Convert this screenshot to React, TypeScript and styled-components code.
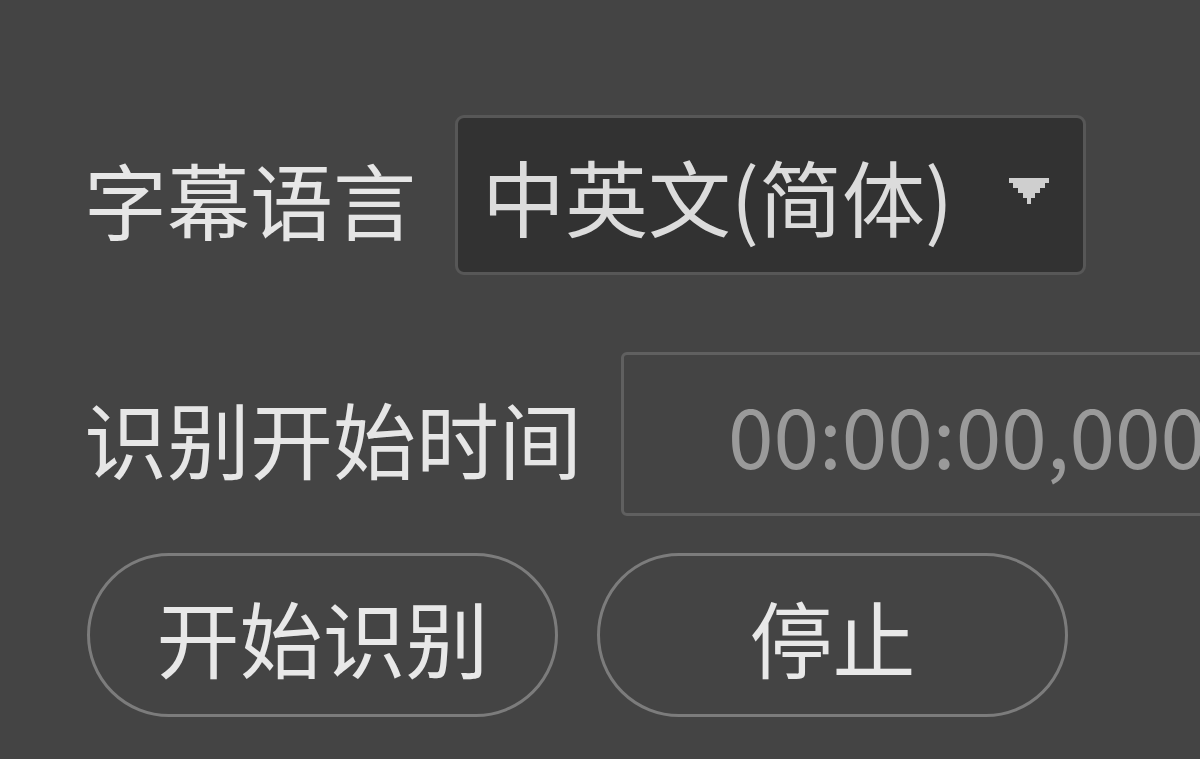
import React from 'react';
import styled, {createGlobalStyle} from 'styled-components';

const GlobalStyle = createGlobalStyle`
    html, body {
        margin: 0;
        padding: 0;
        background: #444444;
        overflow: hidden;
    }
    body {
        font-family: "Noto Sans CJK SC", "Microsoft YaHei", "Noto Sans", sans-serif;
    }
`;

const Panel = styled.div`
    width: 1200px;
    height: 759px;
    box-sizing: border-box;
    padding: 115px 0 0 84px;
    display: flex;
    flex-direction: column;
    overflow: hidden;
`;

const Row = styled.div<{ $after: number }>`
    display: flex;
    align-items: center;
    gap: 39px;
    margin-bottom: ${({$after}) => $after}px;
`;

const Label = styled.span`
    font-size: 83px;
    line-height: 1;
    color: #e6e6e6;
    white-space: nowrap;
    margin-top: 6px;
`;

const Select = styled.div`
    box-sizing: border-box;
    width: 631px;
    height: 160px;
    display: flex;
    align-items: center;
    justify-content: space-between;
    padding: 0 34px 0 24px;
    background: #323232;
    border: 3px solid #575757;
    border-radius: 9px;
`;

const SelectValue = styled.span`
    font-size: 83px;
    line-height: 1;
    color: #dcdcdc;
    white-space: nowrap;
`;

const Arrow = styled.svg`
    width: 40px;
    height: 26px;
    margin-top: -8px;
`;

const TimeInput = styled.div`
    box-sizing: border-box;
    width: 720px;
    flex-shrink: 0;
    height: 164px;
    display: flex;
    align-items: center;
    padding-left: 104px;
    border: 3px solid #606060;
    border-radius: 6px;
`;

const TimeText = styled.span`
    font-size: 82px;
    line-height: 1;
    color: #9a9a9a;
    white-space: nowrap;
`;

const Buttons = styled.div`
    display: flex;
    gap: 39px;
    padding-left: 3px;
`;

const PillButton = styled.button`
    box-sizing: border-box;
    width: 471px;
    height: 164px;
    border: 3px solid #7c7c7c;
    border-radius: 82px;
    background: transparent;
    color: #e8e8e8;
    font-family: inherit;
    font-size: 83px;
    line-height: 1;
    padding: 0;
    display: flex;
    align-items: center;
    justify-content: center;
    cursor: pointer;
`;

const ButtonLabel = styled.span`
    margin-top: 2px;
`;

const DropArrow = () => (
    <Arrow viewBox="0 0 40 26">
        <polygon
            points="0,0 40,0 40,5 36,5 36,10 31,10 31,15 26,15 26,20 22,20 22,26 18,26 18,20 14,20 14,15 9,15 9,10 4,10 4,5 0,5"
            fill="#cfcfcf"
        />
    </Arrow>
);

export default function App() {
    return (
        <>
            <GlobalStyle/>
            <Panel>
                <Row $after={77}>
                    <Label>字幕语言</Label>
                    <Select>
                        <SelectValue>中英文(简体)</SelectValue>
                        <DropArrow/>
                    </Select>
                </Row>
                <Row $after={37}>
                    <Label>识别开始时间</Label>
                    <TimeInput>
                        <TimeText>00:00:00,000</TimeText>
                    </TimeInput>
                </Row>
                <Buttons>
                    <PillButton><ButtonLabel>开始识别</ButtonLabel></PillButton>
                    <PillButton><ButtonLabel>停止</ButtonLabel></PillButton>
                </Buttons>
            </Panel>
        </>
    );
}
